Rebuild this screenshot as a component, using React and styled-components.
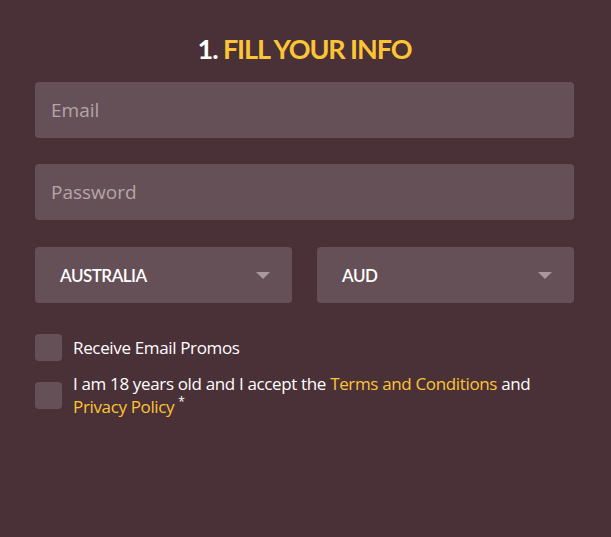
import React from 'react';
import styled, { createGlobalStyle } from 'styled-components';

const colors = {
  bg: '#4a3037',
  field: '#665057',
  placeholder: '#b3a5a9',
  yellow: '#fcc536',
  text: '#ffffff',
};

const GlobalStyle = createGlobalStyle`
  html, body {
    margin: 0;
    padding: 0;
    background: ${colors.bg};
  }
  * {
    box-sizing: border-box;
  }
`;

const Page = styled.div`
  width: 611px;
  height: 537px;
  background: ${colors.bg};
  padding: 33px 37px 0 35px;
  font-family: 'Open Sans', 'Noto Sans', sans-serif;
`;

const Title = styled.h2`
  margin: 0 0 17px;
  text-align: center;
  font-family: 'Lato', 'Noto Sans', sans-serif;
  font-weight: 700;
  font-size: 27px;
  line-height: 32px;
  letter-spacing: -1.1px;
  color: ${colors.yellow};

  span {
    color: ${colors.text};
  }
`;

const Form = styled.form`
  display: flex;
  flex-direction: column;
  gap: 26px;
`;

const Input = styled.input`
  width: 100%;
  height: 56px;
  border: none;
  border-radius: 4px;
  background: ${colors.field};
  padding: 0 16px;
  font-family: 'Open Sans', 'Noto Sans', sans-serif;
  font-size: 19px;
  color: ${colors.text};
  outline: none;

  &::placeholder {
    color: ${colors.placeholder};
  }
`;

const SelectRow = styled.div`
  display: grid;
  grid-template-columns: 1fr 1fr;
  gap: 25px;
  margin-top: 1px;
`;

const Select = styled.div`
  height: 56px;
  border-radius: 4px;
  background: ${colors.field};
  padding: 0 22px 0 25px;
  display: flex;
  align-items: center;
  justify-content: space-between;
  font-family: 'Lato', 'Noto Sans', sans-serif;
  font-weight: 600;
  font-size: 17px;
  letter-spacing: -0.5px;
  color: ${colors.text};
`;

const Caret = styled.span`
  width: 0;
  height: 0;
  border-left: 7px solid transparent;
  border-right: 7px solid transparent;
  border-top: 7px solid #a8989d;
`;

const Checks = styled.div`
  display: flex;
  flex-direction: column;
  gap: 11px;
  margin-top: 5px;
`;

const CheckRow = styled.label`
  display: flex;
  align-items: center;
  gap: 11px;
  font-size: 17px;
  line-height: 23px;
  color: ${colors.text};
  letter-spacing: -0.35px;
`;

const Box = styled.span`
  flex: none;
  width: 27px;
  height: 27px;
  border-radius: 4px;
  background: ${colors.field};
`;

const Link = styled.a`
  color: ${colors.yellow};
  text-decoration: none;
`;

const Star = styled.sup`
  font-size: 12px;
  line-height: 0;
  margin-left: 4px;
`;

export default function App() {
  return (
    <>
      <GlobalStyle />
      <Page>
        <Title>
          <span>1.</span> FILL YOUR INFO
        </Title>
        <Form>
          <Input placeholder="Email" />
          <Input type="password" placeholder="Password" />
          <SelectRow>
            <Select>
              AUSTRALIA
              <Caret />
            </Select>
            <Select>
              AUD
              <Caret />
            </Select>
          </SelectRow>
          <Checks>
            <CheckRow>
              <Box />
              Receive Email Promos
            </CheckRow>
            <CheckRow>
              <Box />
              <span>
                I am 18 years old and I accept the <Link>Terms and Conditions</Link> and
                <br />
                <Link>Privacy Policy</Link>
                <Star>*</Star>
              </span>
            </CheckRow>
          </Checks>
        </Form>
      </Page>
    </>
  );
}
